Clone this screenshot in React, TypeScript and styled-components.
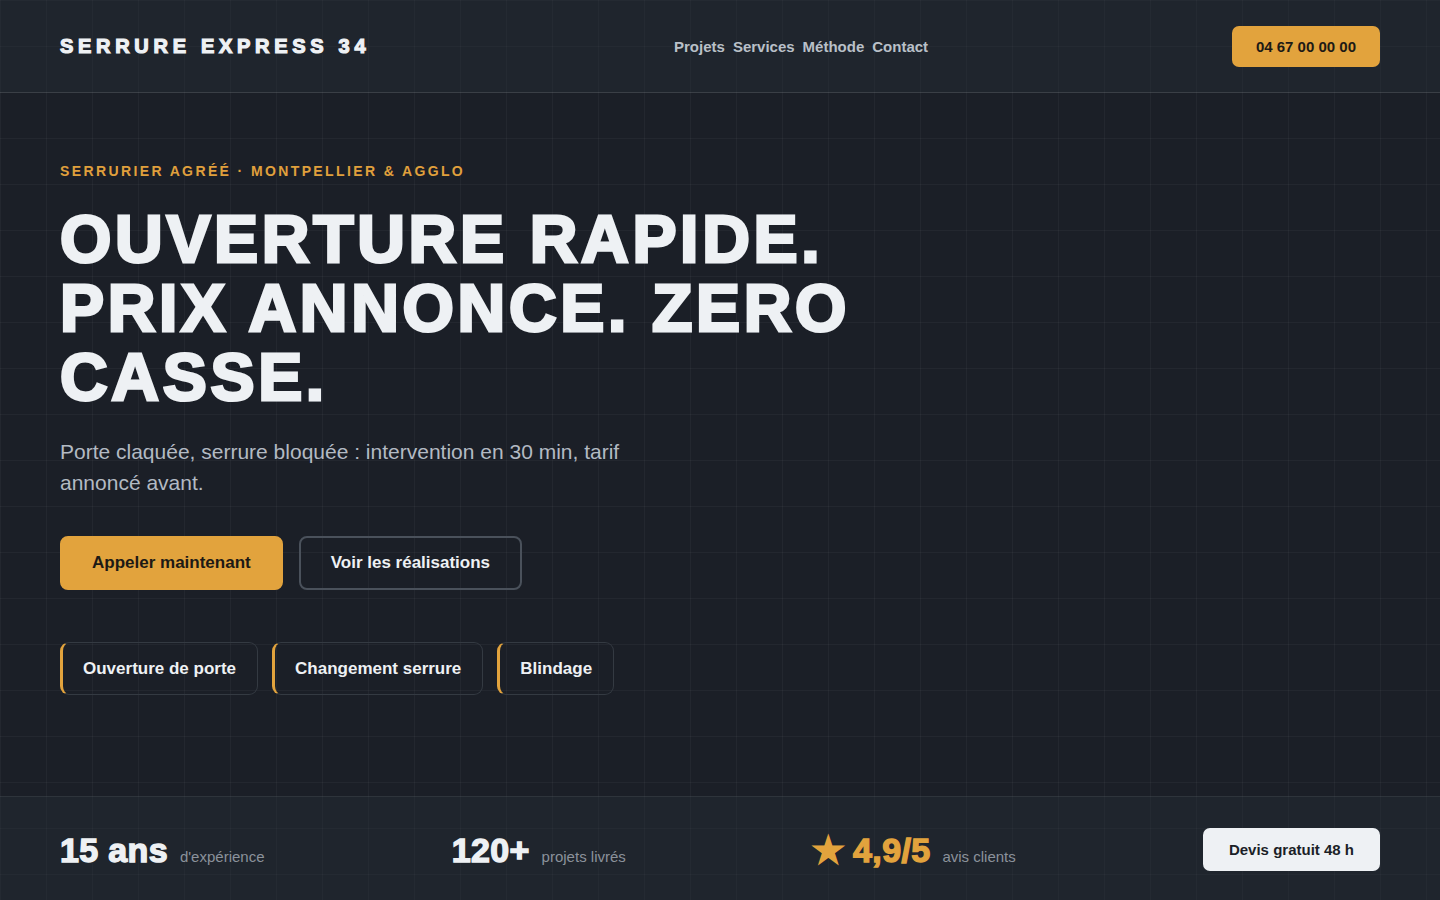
import * as React from "react";
import styled, { createGlobalStyle } from "styled-components";

const GlobalStyle = createGlobalStyle`
  * { box-sizing: border-box; }
  html, body {
    margin: 0;
    padding: 0;
    background: #1b1f27;
  }
  body {
    font-family: "Liberation Sans", Arial, sans-serif;
    color: #eef1f4;
  }
`;

// heavy display face: Arial-shaped bold, thickened a little with a stroke
const heavy = (stroke: number, color = "#eef1f4") => `
  font-family: "Liberation Sans", Arial, sans-serif;
  font-weight: 700;
  -webkit-text-stroke: ${stroke}px ${color};
`;

const stats = [
  { value: "15 ans", label: "d'expérience", accent: false },
  { value: "120+", label: "projets livrés", accent: false },
  { value: "★ 4,9/5", label: "avis clients", accent: true },
];

const services = ["Ouverture de porte", "Changement serrure", "Blindage"];

const App: React.FC = () => {
  return (
    <Page>
      <GlobalStyle />
      <Header>
        <Logo>SERRURE EXPRESS 34</Logo>
        <Nav>
          <NavLink href="#">Projets</NavLink>
          <NavLink href="#">Services</NavLink>
          <NavLink href="#">Méthode</NavLink>
          <NavLink href="#">Contact</NavLink>
        </Nav>
        <PhoneButton>04 67 00 00 00</PhoneButton>
      </Header>

      <Hero>
        <Eyebrow>Serrurier agréé · Montpellier &amp; agglo</Eyebrow>
        <Title>OUVERTURE RAPIDE. PRIX ANNONCE. ZERO CASSE.</Title>
        <Lead>
          Porte claquée, serrure bloquée : intervention en 30 min, tarif
          annoncé avant.
        </Lead>
        <Actions>
          <Button variant="primary">Appeler maintenant</Button>
          <Button variant="ghost">Voir les réalisations</Button>
        </Actions>
        <Chips>
          {services.map((s) => (
            <Chip key={s}>{s}</Chip>
          ))}
        </Chips>
      </Hero>

      <StatsBar>
        {stats.map((s) => (
          <Stat key={s.label}>
            <StatValue accent={s.accent}>{s.value}</StatValue>
            <StatLabel>{s.label}</StatLabel>
          </Stat>
        ))}
        <QuoteButton>Devis gratuit 48 h</QuoteButton>
      </StatsBar>
    </Page>
  );
};

const Page = styled.div`
  min-height: 100vh;
  display: flex;
  flex-direction: column;
  background-color: #1b1f27;
  background-image: linear-gradient(
      to right,
      rgba(255, 255, 255, 0.035) 1px,
      transparent 1px
    ),
    linear-gradient(to bottom, rgba(255, 255, 255, 0.035) 1px, transparent 1px);
  background-size: 46px 46px;
`;

const Header = styled.header`
  height: 93px;
  padding: 1px 60px 0;
  display: flex;
  align-items: center;
  justify-content: space-between;
  background: rgba(40, 48, 58, 0.35);
  border-bottom: 1px solid rgba(255, 255, 255, 0.1);
`;

const Logo = styled.div`
  ${heavy(1.2)}
  font-size: 20px;
  letter-spacing: 0.235em;
  color: #eef1f4;
`;

const Nav = styled.nav`
  display: flex;
  gap: 8px;
`;

const NavLink = styled.a`
  font-size: 15px;
  font-weight: 700;
  color: #b9c0c8;
  text-decoration: none;
`;

const PhoneButton = styled.button`
  font-family: "Liberation Sans", Arial, sans-serif;
  font-size: 15px;
  font-weight: 700;
  color: #1d1a15;
  background: #e2a33d;
  border: none;
  border-radius: 7px;
  padding: 0 24px;
  height: 41px;
`;

const Hero = styled.main`
  flex: 1;
  padding: 68px 60px 0;
`;

const Eyebrow = styled.div`
  font-size: 14px;
  line-height: 20px;
  font-weight: 700;
  letter-spacing: 0.17em;
  text-transform: uppercase;
  color: #e0a03c;
  margin-bottom: 24px;
`;

const Title = styled.h1`
  ${heavy(3)}
  margin: 0;
  max-width: 880px;
  font-size: 66px;
  line-height: 69px;
  letter-spacing: 0.056em;
  color: #eef1f4;
`;

const Lead = styled.p`
  margin: 24px 0 0;
  max-width: 600px;
  font-size: 21px;
  line-height: 31px;
  color: #b3bac3;
`;

const Actions = styled.div`
  display: flex;
  gap: 16px;
  margin-top: 38px;
`;

const Button = styled.button<{ variant: "primary" | "ghost" }>`
  font-family: "Liberation Sans", Arial, sans-serif;
  font-size: 17px;
  font-weight: 700;
  line-height: 20px;
  padding: 15px 30px;
  border-radius: 8px;
  border: 2px solid
    ${(p) => (p.variant === "primary" ? "#e2a33d" : "#4a515b")};
  background: ${(p) => (p.variant === "primary" ? "#e2a33d" : "transparent")};
  color: ${(p) => (p.variant === "primary" ? "#1d1a15" : "#eef1f4")};
`;

const Chips = styled.div`
  display: flex;
  gap: 14px;
  margin-top: 52px;
`;

const Chip = styled.div`
  height: 53px;
  display: flex;
  align-items: center;
  padding: 0 21px 0 20px;
  font-size: 17px;
  font-weight: 700;
  color: #eef1f4;
  border: 1px solid #343a42;
  border-left: 3px solid #e2a33d;
  border-radius: 9px;
`;

const StatsBar = styled.footer`
  height: 104px;
  padding: 0 60px;
  display: flex;
  align-items: center;
  justify-content: space-between;
  background: rgba(40, 48, 58, 0.35);
  border-top: 1px solid rgba(255, 255, 255, 0.07);
`;

const Stat = styled.div`
  display: flex;
  align-items: baseline;
  gap: 12px;
  margin-top: 3px;
`;

const StatValue = styled.span<{ accent: boolean }>`
  ${(p) => heavy(1.4, p.accent ? "#e2a33d" : "#eef1f4")}
  font-size: 34px;
  letter-spacing: 0.01em;
  color: ${(p) => (p.accent ? "#e2a33d" : "#eef1f4")};
`;

const StatLabel = styled.span`
  font-size: 15px;
  color: #8b929b;
`;

const QuoteButton = styled.button`
  font-family: "Liberation Sans", Arial, sans-serif;
  font-size: 15px;
  font-weight: 700;
  color: #1b1f27;
  background: #eef1f4;
  border: none;
  border-radius: 7px;
  height: 43px;
  padding: 0 26px;
  margin-top: 2px;
`;

export default App;
